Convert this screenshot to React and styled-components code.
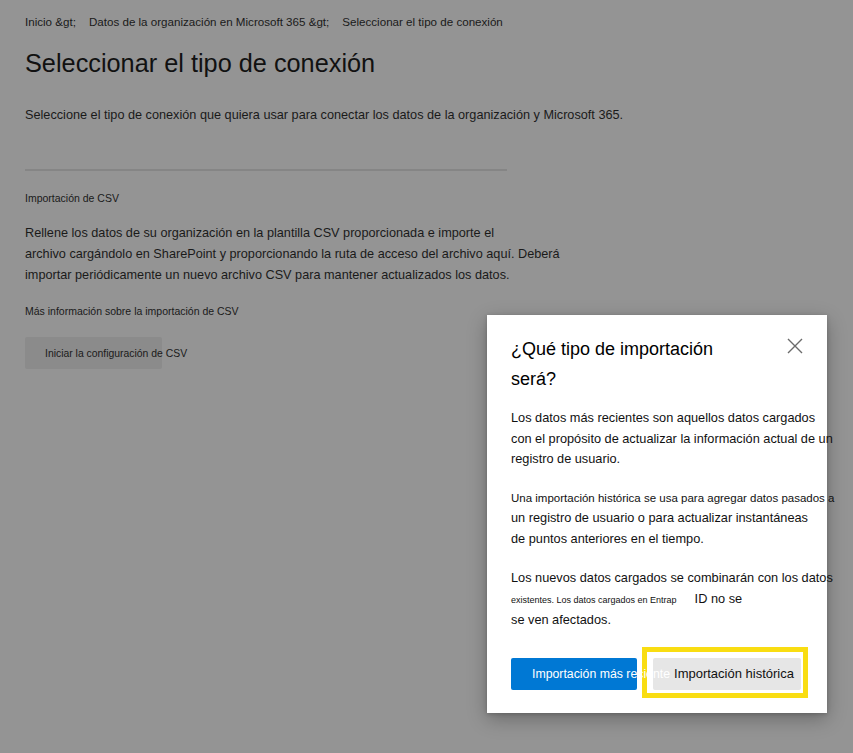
import React from 'react';
import styled, { createGlobalStyle } from 'styled-components';

const GlobalStyle = createGlobalStyle`
  html, body {
    margin: 0;
    padding: 0;
    background: #949494;
  }
  body {
    font-family: 'Liberation Sans', Arial, sans-serif;
    color: #1a1a1a;
  }
`;

const Page = styled.div`
  position: relative;
  width: 853px;
  height: 753px;
  overflow: hidden;
  background: #949494;
  box-sizing: border-box;
  padding: 14px 25px 0;
`;

const Breadcrumb = styled.nav`
  display: flex;
  gap: 13px;
  font-size: 11.6px;
  line-height: 16px;
`;

const Title = styled.h1`
  margin: 17px 0 0;
  font-size: 25.3px;
  font-weight: 400;
  line-height: 32px;
  color: #111;
`;

const Lead = styled.p`
  margin: 26px 0 0;
  font-size: 12.7px;
  line-height: 20px;
`;

const Divider = styled.hr`
  margin: 44px 0 0;
  width: 482px;
  height: 2px;
  border: 0;
  background: #858585;
`;

const Label = styled.p`
  margin: ${(p) => p.$top}px 0 0;
  font-size: 10.5px;
  line-height: 18px;
`;

const Body = styled.p`
  margin: 16px 0 0;
  font-size: 12.7px;
  line-height: 21px;

  > span {
    display: block;
  }
`;

const GhostButton = styled.button`
  display: block;
  margin-top: 17px;
  width: 137px;
  height: 32px;
  padding: 0 0 0 20px;
  border: 0;
  border-radius: 2px;
  background: #8b8b8b;
  color: #1a1a1a;
  font-family: inherit;
  font-size: 10.4px;
  text-align: left;
  white-space: nowrap;
  overflow: visible;
`;

const Dialog = styled.div`
  position: absolute;
  left: 487px;
  top: 315px;
  width: 340px;
  height: 398px;
  box-sizing: border-box;
  padding: 19px 24px 0;
  background: #fff;
  box-shadow: 0 6px 18px rgba(0, 0, 0, 0.28), 0 1px 4px rgba(0, 0, 0, 0.18);
`;

const DialogHeader = styled.div`
  display: flex;
  justify-content: space-between;
  align-items: flex-start;
`;

const DialogTitle = styled.h2`
  margin: 0;
  width: 230px;
  font-size: 18px;
  font-weight: 400;
  line-height: 30px;
  color: #000;
`;

const CloseButton = styled.button`
  margin: 4px 0 0;
  padding: 0;
  width: 16px;
  height: 16px;
  border: 0;
  background: none;
  display: flex;
`;

const DialogText = styled.p`
  margin: ${(p) => p.$top}px 0 0;
  font-size: 12.75px;
  line-height: 20.5px;
  color: #111;
  white-space: nowrap;

  > span {
    display: block;
  }
`;

const Small = styled.span`
  font-size: ${(p) => p.$size}px;
`;

const Gap = styled.span`
  display: inline-block;
  margin-left: 18px;
`;

const Footer = styled.div`
  display: flex;
  align-items: flex-start;
  margin-top: 27px;
  gap: 5px;
`;

const PrimaryButton = styled.button`
  position: relative;
  z-index: 1;
  width: 126px;
  height: 32px;
  padding: 0 0 0 21px;
  border: 0;
  border-radius: 2px;
  background: #0078d4;
  color: #fff;
  font-family: inherit;
  font-size: 12.3px;
  text-align: left;
  white-space: nowrap;
  overflow: visible;
`;

const Highlight = styled.div`
  margin-top: -11px;
  padding: 6px 2px 3px 6px;
  border: 5px solid #f9dd12;
`;

const SecondaryButton = styled.button`
  display: block;
  width: 148px;
  height: 32px;
  padding: 0 0 0 14px;
  border: 0;
  border-radius: 2px;
  background: #e6e6e6;
  color: #111;
  font-family: inherit;
  font-size: 13px;
  white-space: nowrap;
`;

export default function App() {
  return (
    <>
      <GlobalStyle />
      <Page>
        <Breadcrumb>
          <span>Inicio &amp;gt;</span>
          <span>Datos de la organización en Microsoft 365 &amp;gt;</span>
          <span>Seleccionar el tipo de conexión</span>
        </Breadcrumb>
        <Title>Seleccionar el tipo de conexión</Title>
        <Lead>
          Seleccione el tipo de conexión que quiera usar para conectar los datos de la organización y
          Microsoft 365.
        </Lead>
        <Divider />
        <Label $top={18}>Importación de CSV</Label>
        <Body>
          <span>Rellene los datos de su organización en la plantilla CSV proporcionada e importe el</span>
          <span>
            archivo cargándolo en SharePoint y proporcionando la ruta de acceso del archivo aquí. Deberá
          </span>
          <span>importar periódicamente un nuevo archivo CSV para mantener actualizados los datos.</span>
        </Body>
        <Label $top={16}>Más información sobre la importación de CSV</Label>
        <GhostButton>Iniciar la configuración de CSV</GhostButton>

        <Dialog role="dialog">
          <DialogHeader>
            <DialogTitle>¿Qué tipo de importación será?</DialogTitle>
            <CloseButton aria-label="Cerrar">
              <svg width="16" height="16" viewBox="0 0 16 16">
                <path d="M1 1 L15 15 M15 1 L1 15" stroke="#6b6b6b" strokeWidth="1.4" fill="none" />
              </svg>
            </CloseButton>
          </DialogHeader>
          <DialogText $top={14}>
            <span>Los datos más recientes son aquellos datos cargados</span>
            <span>con el propósito de actualizar la información actual de un</span>
            <span>registro de usuario.</span>
          </DialogText>
          <DialogText $top={18}>
            <span>
              <Small $size={11.5}>Una importación histórica se usa para agregar datos pasados a</Small>
            </span>
            <span>un registro de usuario o para actualizar instantáneas</span>
            <span>de puntos anteriores en el tiempo.</span>
          </DialogText>
          <DialogText $top={19}>
            <span>Los nuevos datos cargados se combinarán con los datos</span>
            <span>
              <Small $size={9}>existentes. Los datos cargados en Entrap</Small>
              <Gap>ID no se</Gap>
            </span>
            <span>se ven afectados.</span>
          </DialogText>
          <Footer>
            <PrimaryButton>Importación más reciente</PrimaryButton>
            <Highlight>
              <SecondaryButton>Importación histórica</SecondaryButton>
            </Highlight>
          </Footer>
        </Dialog>
      </Page>
    </>
  );
}
